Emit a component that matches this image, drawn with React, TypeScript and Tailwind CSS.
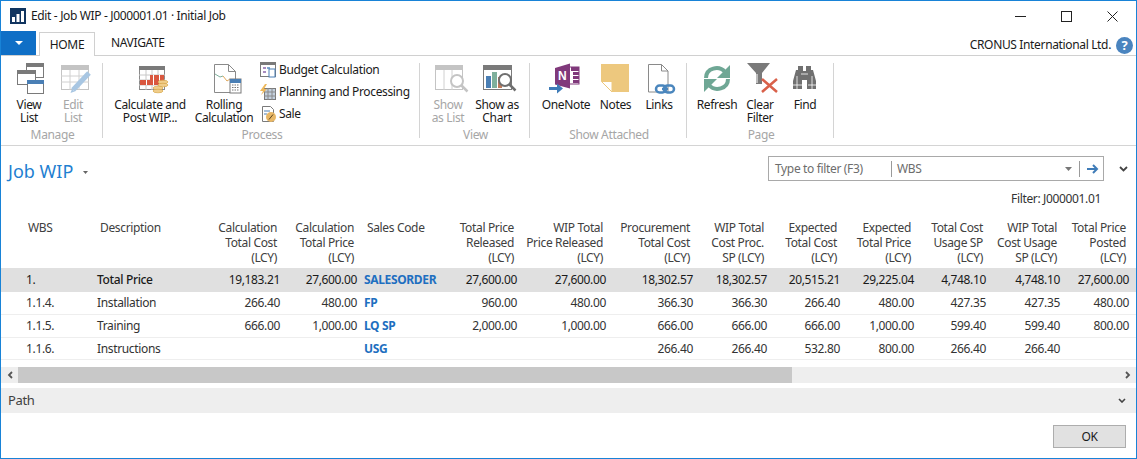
import type { ReactNode } from "react";

const rows = [
  { wbs: "1.", desc: "Total Price", code: "SALESORDER", total: true, v: ["19,183.21", "27,600.00", "27,600.00", "27,600.00", "18,302.57", "18,302.57", "20,515.21", "29,225.04", "4,748.10", "4,748.10", "27,600.00"] },
  { wbs: "1.1.4.", desc: "Installation", code: "FP", v: ["266.40", "480.00", "960.00", "480.00", "366.30", "366.30", "266.40", "480.00", "427.35", "427.35", "480.00"] },
  { wbs: "1.1.5.", desc: "Training", code: "LQ SP", v: ["666.00", "1,000.00", "2,000.00", "1,000.00", "666.00", "666.00", "666.00", "1,000.00", "599.40", "599.40", "800.00"] },
  { wbs: "1.1.6.", desc: "Instructions", code: "USG", last: true, v: ["", "", "", "", "266.40", "266.40", "532.80", "800.00", "266.40", "266.40", ""] },
];

const gridCols = "grid grid-cols-[93px_106px_83px_77px_90px_70px_89px_87px_74px_73px_74px_72px_74px_69px_4px]";

function Icon({ box, children }: { box: string; children: ReactNode }) {
  const [, , w, h] = box.split(" ");
  return (
    <svg viewBox={box} width={w} height={h} className="shrink-0 overflow-visible">
      {children}
    </svg>
  );
}

function LargeButton({ w, label, disabled, icon }: { w: string; label: ReactNode; disabled?: boolean; icon: ReactNode }) {
  return (
    <div className={`flex flex-col items-center ${w}`}>
      <div className="flex h-[32px] justify-center">{icon}</div>
      <div className={`mt-[3px] text-center leading-[13px] ${disabled ? "text-[#a6a6a6]" : "text-[#1a1a1a]"}`}>{label}</div>
    </div>
  );
}

function Group({ w, label, children }: { w: string; label: string; children: ReactNode }) {
  return (
    <div className={`flex h-[82px] ${w}`}>
      <div className="flex min-w-0 flex-1 flex-col">
        <div className="flex h-[63px]">{children}</div>
        <div className="h-[18px] pl-[2px] text-center leading-[18px] text-[#a6a6a6]">{label}</div>
      </div>
      <div className="h-[75px] w-px bg-[#d4d4d4]" />
    </div>
  );
}

function Magnifier({ x, y, c }: { x: number; y: number; c: string }) {
  return (
    <g fill="none" stroke={c}>
      <circle cx={x} cy={y} r="6" strokeWidth="2" fill="#fff" />
      <path d={`M${x + 4.5} ${y + 4.5}l6 6`} strokeWidth="2.5" />
    </g>
  );
}

function SmallRow({ icon, label }: { icon: ReactNode; label: string }) {
  return (
    <div className="flex h-[22px] items-center gap-[3px]">
      {icon}
      <span className="text-[#1a1a1a]">{label}</span>
    </div>
  );
}

export default function App() {
  return (
    <div className="box-border flex h-[459px] w-[1137px] flex-col overflow-hidden border border-[#1883d7] bg-white text-[12px] text-[#262626] [font-family:'Noto_Sans',sans-serif] tracking-[-0.35px]">
      {/* title bar */}
      <div className="flex h-[30px] items-center">
        <svg viewBox="8 8 18 16" width="18" height="16" className="ml-[8px] shrink-0">
          <rect x="9" y="8" width="16" height="16" fill="#10345f" />
          <path d="M11 22v-5h3v5zM15.5 22v-8h3v8zM20 22V11h3v11z" fill="#fff" />
        </svg>
        <span className="ml-[4px] text-[#1a1a1a]">Edit - Job WIP - J000001.01 · Initial Job</span>
        <div className="ml-auto flex items-center">
          <svg width="11" height="1" className="mr-[35px]"><rect width="11" height="1" fill="#222" /></svg>
          <svg width="11" height="11" className="mr-[35px]"><rect x="0.5" y="0.5" width="10" height="10" fill="none" stroke="#222" /></svg>
          <svg width="11" height="11" className="mr-[18px]"><path d="M0.5 0.5l10 10M10.5 0.5l-10 10" stroke="#222" fill="none" /></svg>
        </div>
      </div>

      {/* tabs */}
      <div className="flex h-[25px] items-end border-b border-[#d0d0d0]">
        <div className="flex h-[24px] w-[35px] items-center justify-center bg-[#0f6fc6]">
          <svg width="8" height="4"><path d="M0 0h8L4 4z" fill="#fff" /></svg>
        </div>
        <div className="relative top-px ml-[3px] flex h-[24px] w-[56px] items-center justify-center border border-b-0 border-[#d0d0d0] bg-white text-[#1a1a1a]">HOME</div>
        <div className="ml-[16px] flex h-[24px] items-center text-[#1a1a1a]">NAVIGATE</div>
        <div className="ml-auto mr-[25px] flex h-[24px] items-center pt-[4px] text-[#1a1a1a]">CRONUS International Ltd.</div>
        <div className="absolute left-[1116px] top-[37px] flex h-[17px] w-[17px] items-center justify-center rounded-full bg-[#4a84bf] text-[13px] font-bold leading-none tracking-normal text-white">?</div>
      </div>

      {/* ribbon */}
      <div className="flex h-[90px] border-b border-[#d4d4d4] pt-[7px]">
        <Group w="w-[102px]" label="Manage">
          <div className="flex pl-[6px]">
            <LargeButton w="w-[44px]" label={<>View<br />List</>} icon={
              <Icon box="7 63 44 32">
                <rect x="26.5" y="63.5" width="17" height="14" fill="#fff" stroke="#7a7a7a" />
                <rect x="26" y="63" width="18" height="4" fill="#7a7a7a" />
                <rect x="17.5" y="70.5" width="18" height="14" fill="#fff" stroke="#7a7a7a" />
                <rect x="17" y="70" width="19" height="4" fill="#7a7a7a" />
                <rect x="27.5" y="80.5" width="16" height="13" fill="#fff" stroke="#7a7a7a" />
                <rect x="27" y="80" width="17" height="4" fill="#4a7fb5" />
              </Icon>
            } />
            <LargeButton w="w-[44px]" disabled label={<>Edit<br />List</>} icon={
              <Icon box="51 63 44 32">
                <rect x="61.5" y="65.5" width="27" height="24" fill="#fff" stroke="#c4c4c4" />
                <rect x="61" y="65" width="28" height="5" fill="#c4c4c4" />
                <path d="M61 76h28M61 82h28M70 70v20M79 70v20" stroke="#d0d0d0" />
                <path d="M89 73L73 90" stroke="#a8c6e2" strokeWidth="5" />
                <path d="M72 89l-1.500 4 4-1.500z" fill="#a8c6e2" />
              </Icon>
            } />
          </div>
        </Group>
        <Group w="w-[317px]" label="Process">
          <div className="flex pl-[8px]">
            <LargeButton w="w-[78px]" label={<>Calculate and<br />Post WIP...</>} icon={
              <Icon box="110 63 78 32">
                <rect x="138.500" y="66.500" width="25" height="23" fill="#fff" stroke="#8a8a8a" />
                <rect x="138" y="66" width="26" height="4" fill="#7a7a7a" />
                <path d="M138 75h26M138 80h26M138 85h26M145 70v20M151 70v20M157 70v20" stroke="#c8c8c8" />
                <path d="M149 75h14v5h-14zM139 80h24v5h-24z" fill="#d9573f" />
                <path d="M152 75h1v10h-1zM158 75h1v10h-1zM145 80h1v5h-1z" fill="#fff" />
                <ellipse cx="162" cy="82" rx="5" ry="1.800" fill="#f0cd8a" stroke="#d9a94e" strokeWidth=".7" />
                <ellipse cx="162" cy="85" rx="5" ry="1.800" fill="#f0cd8a" stroke="#d9a94e" strokeWidth=".7" />
                <ellipse cx="157" cy="88" rx="5" ry="1.800" fill="#f0cd8a" stroke="#d9a94e" strokeWidth=".7" />
                <ellipse cx="157" cy="91" rx="5" ry="1.800" fill="#f0cd8a" stroke="#d9a94e" strokeWidth=".7" />
              </Icon>
            } />
            <LargeButton w="w-[70px]" label={<>Rolling<br />Calculation</>} icon={
              <Icon box="189 63 70 32">
                <path d="M214.500 64.500h14l7 7v21h-21z" fill="#fff" stroke="#8a8a8a" />
                <path d="M228.500 64.500v7h7" fill="none" stroke="#8a8a8a" />
                <path d="M215 74l5 3 3-1" fill="none" stroke="#7fb09c" />
                <path d="M223 76l4 5 3-2" fill="none" stroke="#e0a85a" />
                <rect x="230" y="79" width="11" height="14" fill="#fff" stroke="#7a7a7a" />
                <rect x="230" y="79" width="11" height="4" fill="#4a7fb5" />
                <path d="M232 85h7M232 87.500h7M232 90h7" stroke="#777" strokeDasharray="1.500 1" />
              </Icon>
            } />
            <div className="ml-px flex -mt-[4px] flex-col">
              <SmallRow label="Budget Calculation" icon={
                <Icon box="261 62 16 16">
                  <rect x="261.500" y="62.500" width="15" height="14" fill="#fff" stroke="#7a7a7a" />
                  <rect x="261" y="62" width="16" height="3" fill="#7a7a7a" />
                  <path d="M264 67h3v2h-3zM264 71h3v2h-3z" fill="#a88bc0" />
                  <path d="M268 67h3v2h-3z" fill="#7fa8d0" />
                  <rect x="270" y="69" width="6" height="8" fill="#fff" stroke="#4a7fb5" />
                </Icon>
              } />
              <SmallRow label="Planning and Processing" icon={
                <Icon box="261 84 16 16">
                  <rect x="265.500" y="88.500" width="11" height="11" fill="#c3d0de" stroke="#7a7a7a" />
                  <path d="M265 92h12M265 96h12M269 88v12M273 88v12" stroke="#8a8a8a" />
                  <path d="M266 84l-5 7h3l-2 4 6-6h-3l3-5z" fill="#eeb95c" />
                </Icon>
              } />
              <SmallRow label="Sale" icon={
                <Icon box="261 106 16 16">
                  <path d="M263.500 106.500h8l3 3v12h-11z" fill="#fff" stroke="#7a7a7a" />
                  <path d="M265 111h6M265 114h3" stroke="#4a7fb5" />
                  <circle cx="272" cy="117" r="5" fill="#e8b766" />
                  <path d="M270 119.500l4-5" stroke="#5b4520" />
                </Icon>
              } />
            </div>
          </div>
        </Group>
        <Group w="w-[110px]" label="View">
          <div className="flex pl-[4px]">
            <LargeButton w="w-[48px]" disabled label={<>Show<br />as List</>} icon={
              <Icon box="424 63 48 32">
                <rect x="435.500" y="65.500" width="27" height="24" fill="#fff" stroke="#c4c4c4" />
                <rect x="435" y="65" width="28" height="5" fill="#c4c4c4" />
                <path d="M444 70v20M452 70v20" stroke="#d0d0d0" />
                <Magnifier x={457} y={81} c="#c4c4c4" />
              </Icon>
            } />
            <LargeButton w="w-[50px]" label={<>Show as<br />Chart</>} icon={
              <Icon box="472 63 50 32">
                <rect x="483.500" y="65.500" width="28" height="24" fill="#fff" stroke="#7a7a7a" />
                <rect x="483" y="65" width="29" height="5" fill="#7a7a7a" />
                <rect x="486" y="76" width="5" height="12" fill="#4a7fb5" />
                <rect x="492" y="72" width="5" height="16" fill="#7fb09c" />
                <rect x="498" y="77" width="4" height="11" fill="#c07a5a" />
                <Magnifier x={505} y={80} c="#6f6f6f" />
              </Icon>
            } />
          </div>
        </Group>
        <Group w="w-[157px]" label="Show Attached">
          <div className="flex pl-[8px]">
            <LargeButton w="w-[56px]" label="OneNote" icon={
              <Icon box="538 63 56 32">
                <rect x="568" y="67" width="11" height="17" fill="#fff" stroke="#80397b" />
                <path d="M571 67h8v4h-8zM573 72h6v3h-6zM573 76h6v3h-6zM573 80h6v3h-6z" fill="#80397b" />
                <path d="M555 68l15-4.500v25l-15-4z" fill="#80397b" />
                <text x="558" y="80" fill="#fff" fontSize="12" fontWeight="700" letterSpacing="0" fontFamily="'Liberation Sans',sans-serif">N</text>
                <path d="M549 88.500h11" stroke="#3f7cb8" strokeWidth="3" />
                <path d="M557 83.500l6 5-6 5z" fill="#3f7cb8" />
              </Icon>
            } />
            <LargeButton w="w-[43px]" label="Notes" icon={
              <Icon box="594 63 43 32">
                <path d="M601 64h28v28h-17l-11-11z" fill="#edc87e" />
                <path d="M601.500 81.500h10.500v10.500z" fill="#fff" stroke="#edc87e" />
              </Icon>
            } />
            <LargeButton w="w-[44px]" label="Links" icon={
              <Icon box="637 63 44 32">
                <path d="M648.500 64.500h13l6.500 6.500v21h-19.500z" fill="#fff" stroke="#8a8a8a" />
                <path d="M661.500 64.500v6.500h6.500" fill="none" stroke="#8a8a8a" />
                <rect x="656" y="85.500" width="10" height="7" rx="3.500" fill="#fff" stroke="#4a86bd" strokeWidth="2.500" />
                <rect x="664" y="85.500" width="10" height="7" rx="3.500" fill="none" stroke="#4a86bd" strokeWidth="2.500" />
                <path d="M662 89h6" stroke="#4a86bd" strokeWidth="2.500" />
              </Icon>
            } />
          </div>
        </Group>
        <Group w="w-[147px]" label="Page">
          <div className="flex pl-[5px]">
            <LargeButton w="w-[50px]" label="Refresh" icon={
              <Icon box="692 63 50 32">
                <path d="M706 78c0-10 13-13 19-6" fill="none" stroke="#6fa795" strokeWidth="4" />
                <path d="M730 65v13h-13z" fill="#6fa795" />
                <path d="M728 79c0 10-13 13-19 6" fill="none" stroke="#6fa795" strokeWidth="4" />
                <path d="M704 92V79h13z" fill="#6fa795" />
              </Icon>
            } />
            <LargeButton w="w-[36px]" label={<>Clear<br />Filter</>} icon={
              <Icon box="742 63 36 32">
                <path d="M747 63h23l-8 10v11h-6V73z" fill="#7a7a7a" />
                <path d="M757 74v9" stroke="#fff" />
                <path d="M762 79l15 13M777 79l-15 13" stroke="#d9614a" strokeWidth="2.500" />
              </Icon>
            } />
            <LargeButton w="w-[54px]" label="Find" icon={
              <Icon box="778 63 54 32">
                <path d="M793 81l3-11h2v-4h5v5h3v-5h5v4h2l3 11v8h-9v-9h-5v9h-9z" fill="#707070" />
                <path d="M793 85h9M808 85h9M801 74h7M797 76v13M812 76v13" stroke="#fff" strokeWidth=".8" />
              </Icon>
            } />
          </div>
        </Group>
      </div>

      {/* page header */}
      <div className="flex h-[74px] shrink-0">
        <div className="ml-[7px] mt-[13px] flex h-[24px] items-center text-[18px] tracking-[0px] text-[#1f7fd1]">
          Job WIP
          <svg width="5" height="3" className="ml-[10px] mt-[2px]"><path d="M0 0h5L2.500 3z" fill="#666" /></svg>
        </div>
        <div className="ml-auto mr-[4px] mt-[10px] flex flex-col items-end">
          <div className="flex items-center">
            <div className="flex h-[25px] w-[336px] items-center border border-[#a9a9a9] text-[#6d6d6d]">
              <span className="ml-[6px] w-[116px]">Type to filter (F3)</span>
              <div className="h-[16px] w-px bg-[#9a9a9a]" />
              <span className="ml-[5px] flex-1">WBS</span>
              <svg width="7" height="4" className="mr-[7px]"><path d="M0 0h7L3.500 4z" fill="#777" /></svg>
              <div className="h-[16px] w-px bg-[#9a9a9a]" />
              <svg width="12" height="10" viewBox="0 0 12 10" className="ml-[7px] mr-[4px]"><path d="M0 5h9M6 1l4 4-4 4" fill="none" stroke="#3f7cb8" strokeWidth="2" /></svg>
            </div>
            <svg width="9" height="6" viewBox="0 0 9 6" className="ml-[15px] mr-[4px]"><path d="M1 1l3.500 3.500L8 1" fill="none" stroke="#444" strokeWidth="1.800" /></svg>
          </div>
          <div className="mr-[31px] mt-[9px] text-[#333]">Filter: J000001.01</div>
        </div>
      </div>

      {/* table */}
      <div className="overflow-hidden">
        <div className={`${gridCols} h-[48px] w-[1200px] leading-[15px] text-[#404040]`}>
          <div className="pl-[27px]">WBS</div>
          <div className="pl-[6px]">Description</div>
          <div className="pr-[6px] text-right">Calculation<br />Total Cost<br />(LCY)</div>
          <div className="pr-[6px] text-right">Calculation<br />Total Price<br />(LCY)</div>
          <div className="pl-[7px]">Sales Code</div>
          <div className="pr-[6px] text-right">Total Price<br />Released<br />(LCY)</div>
          <div className="pr-[6px] text-right">WIP Total<br />Price Released<br />(LCY)</div>
          <div className="pr-[6px] text-right">Procurement<br />Total Cost<br />(LCY)</div>
          <div className="pr-[6px] text-right">WIP Total<br />Cost Proc.<br />SP (LCY)</div>
          <div className="pr-[6px] text-right">Expected<br />Total Cost<br />(LCY)</div>
          <div className="pr-[6px] text-right">Expected<br />Total Price<br />(LCY)</div>
          <div className="pr-[6px] text-right">Total Cost<br />Usage SP<br />(LCY)</div>
          <div className="pr-[6px] text-right">WIP Total<br />Cost Usage<br />SP (LCY)</div>
          <div className="pr-[6px] text-right">Total Price<br />Posted<br />(LCY)</div>
        </div>
        {rows.map((r) => (
          <div key={r.wbs} className={`${gridCols} w-[1200px] items-center ${r.total ? "h-[24px] bg-[#e0e0e0] text-[#1a1a1a]" : `${r.last ? "h-[22px]" : "h-[23px]"} border-b border-[#eeeeee] text-[#333]`}`}>
            <div className="pl-[25px]">{r.wbs}</div>
            <div className={`pl-[3px] ${r.total ? "font-medium" : ""}`}>{r.desc}</div>
            <div className="pr-[3px] text-right">{r.v[0]}</div>
            <div className="pr-[3px] text-right">{r.v[1]}</div>
            <div className="pl-[4px] font-bold text-[#1e6fc0]">{r.code}</div>
            {r.v.slice(2).map((val, i) => (
              <div key={i} className="pr-[3px] text-right">{val}</div>
            ))}
          </div>
        ))}
      </div>

      {/* scrollbar */}
      <div className="mt-[7px] flex h-[16px] shrink-0 items-center bg-[#eeeeee]">
        <div className="flex w-[17px] justify-center">
          <svg width="6" height="8" viewBox="0 0 6 8"><path d="M5 1L2 4l3 3" fill="none" stroke="#555" strokeWidth="1.800" /></svg>
        </div>
        <div className="h-full w-[774px] bg-[#c8c8c8]" />
        <div className="ml-auto mr-[5px] flex justify-center">
          <svg width="6" height="8" viewBox="0 0 6 8"><path d="M1 1l3 3-3 3" fill="none" stroke="#555" strokeWidth="1.800" /></svg>
        </div>
      </div>

      {/* path bar */}
      <div className="mt-[5px] flex h-[25px] shrink-0 items-center justify-between bg-[#eeeeee] pl-[7px] pr-[10px] text-[13px] text-[#404040]">
        <span>Path</span>
        <svg width="8" height="5" viewBox="0 0 8 5"><path d="M1 1l3 3 3-3" fill="none" stroke="#444" strokeWidth="1.600" /></svg>
      </div>

      {/* footer */}
      <div className="flex flex-1 justify-end pr-[10px] pt-[12px]">
        <button className="h-[23px] w-[73px] border border-[#adadad] bg-[#e1e1e1] text-[#1a1a1a]">OK</button>
      </div>
    </div>
  );
}
